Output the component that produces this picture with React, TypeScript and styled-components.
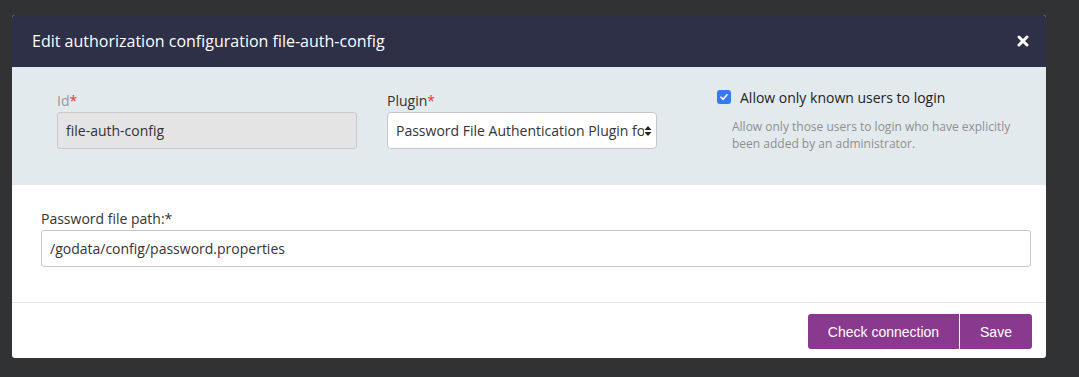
import React from "react";
import styled, { createGlobalStyle } from "styled-components";

const Global = createGlobalStyle`
  html, body { margin: 0; padding: 0; background: #313233; }
  body { font-family: "Open Sans", "Noto Sans", sans-serif; }
  * { box-sizing: border-box; }
`;

const Page = styled.div`
  width: 1079px;
  height: 377px;
  padding: 15px 0 0 12px;
  background: #313233;
`;

const Modal = styled.div`
  width: 1034px;
  background: #fff;
  border-radius: 3px;
  overflow: hidden;
`;

const Header = styled.div`
  height: 52px;
  background: #2d3047;
  display: flex;
  align-items: center;
  justify-content: space-between;
  padding: 0 16px 0 20px;
`;

const Title = styled.h2`
  margin: 0;
  font-size: 16px;
  font-weight: 400;
  color: #fff;
`;

const CloseBtn = styled.button`
  border: 0;
  background: transparent;
  padding: 0;
  width: 14px;
  height: 14px;
  display: flex;
  align-items: center;
  justify-content: center;
  cursor: pointer;
`;

const TopSection = styled.div`
  background: #e3eaed;
  height: 118px;
  padding: 24px 20px 0 45px;
  display: grid;
  grid-template-columns: 300px 270px 1fr;
  column-gap: 30px;
  align-items: start;
`;

const Field = styled.div`
  display: flex;
  flex-direction: column;
`;

const Label = styled.label<{ $muted?: boolean }>`
  font-size: 14px;
  line-height: 20px;
  color: ${(p) => (p.$muted ? "#999" : "#333")};
  margin-bottom: 1px;
`;

const Req = styled.span`
  color: #e53935;
`;

const TextInput = styled.input<{ $readOnly?: boolean }>`
  height: 37px;
  width: 100%;
  border: 1px solid ${(p) => (p.$readOnly ? "#c9c9c9" : "#c7c7c7")};
  border-radius: 3px;
  background: ${(p) => (p.$readOnly ? "#e4e4e4" : "#fff")};
  padding: 0 8px;
  font-family: "Open Sans", sans-serif;
  font-size: 14px;
  color: #333;
  outline: none;
`;

const SelectBox = styled.div`
  height: 37px;
  border: 1px solid #c7c7c7;
  border-radius: 4px;
  background: #fff;
  display: flex;
  align-items: center;
  padding: 0 4px 0 8px;
  font-size: 14px;
  color: #333;
`;

const SelectText = styled.span`
  flex: 1;
  white-space: nowrap;
  overflow: hidden;
`;

const CheckCol = styled.div`
  padding-left: 30px;
  margin-top: -3px;
`;

const CheckRow = styled.div`
  display: flex;
  align-items: center;
  gap: 9px;
  height: 18px;
`;

const Box = styled.span`
  width: 14px;
  height: 14px;
  border-radius: 3px;
  background: #3478f6;
  display: flex;
  align-items: center;
  justify-content: center;
`;

const CheckLabel = styled.span`
  font-size: 14px;
  color: #222;
`;

const Help = styled.p`
  margin: 12px 0 0 15px;
  font-size: 12px;
  line-height: 17px;
  color: #8f8f8f;
  width: 290px;
`;

const Body = styled.div`
  padding: 24px 15px 35px 29px;
  border-bottom: 1px solid #e8e8e8;
`;

const Footer = styled.div`
  display: flex;
  justify-content: flex-end;
  padding: 11px 14px 9px;
`;

const BtnGroup = styled.div`
  display: flex;
  gap: 1px;
`;

const Button = styled.button<{ $w: number }>`
  width: ${(p) => p.$w}px;
  height: 35px;
  border: 0;
  background: #8a3a8e;
  color: #fff;
  font-family: "Liberation Sans", Arial, sans-serif;
  font-size: 14px;
  cursor: pointer;
  &:first-child { border-radius: 3px 0 0 3px; }
  &:last-child { border-radius: 0 3px 3px 0; }
`;

export default function App() {
  return (
    <Page>
      <Global />
      <Modal>
        <Header>
          <Title>Edit authorization configuration file-auth-config</Title>
          <CloseBtn aria-label="close">
            <svg width="12" height="12" viewBox="0 0 12 12">
              <path d="M2 2 L10 10 M10 2 L2 10" stroke="#fff" strokeWidth="3" strokeLinecap="round" />
            </svg>
          </CloseBtn>
        </Header>
        <TopSection>
          <Field>
            <Label $muted>
              Id<Req>*</Req>
            </Label>
            <TextInput $readOnly readOnly value="file-auth-config" />
          </Field>
          <Field>
            <Label>
              Plugin<Req>*</Req>
            </Label>
            <SelectBox>
              <SelectText>Password File Authentication Plugin for GoCD</SelectText>
              <svg width="8" height="12" viewBox="0 0 8 12">
                <path d="M4 1 L7.5 5 H0.5 Z M4 11 L7.5 7 H0.5 Z" fill="#222" />
              </svg>
            </SelectBox>
          </Field>
          <CheckCol>
            <CheckRow>
              <Box>
                <svg width="10" height="10" viewBox="0 0 10 10">
                  <path d="M2 5.2 L4.2 7.3 L8 2.8" stroke="#fff" strokeWidth="1.6" fill="none" strokeLinecap="round" strokeLinejoin="round" />
                </svg>
              </Box>
              <CheckLabel>Allow only known users to login</CheckLabel>
            </CheckRow>
            <Help>Allow only those users to login who have explicitly been added by an administrator.</Help>
          </CheckCol>
        </TopSection>
        <Body>
          <Field>
            <Label>Password file path:*</Label>
            <TextInput readOnly value="/godata/config/password.properties" />
          </Field>
        </Body>
        <Footer>
          <BtnGroup>
            <Button $w={151}>Check connection</Button>
            <Button $w={72}>Save</Button>
          </BtnGroup>
        </Footer>
      </Modal>
    </Page>
  );
}
